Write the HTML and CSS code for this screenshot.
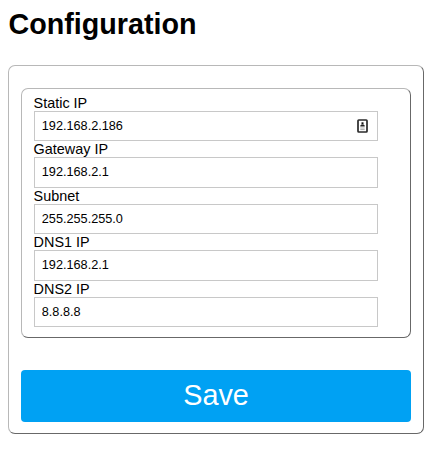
FILE: index.html
```html
<!DOCTYPE html>
<html lang="en">
<head>
<meta charset="utf-8">
<title>Configuration</title>
<link rel="stylesheet" href="styles.css">
</head>
<body>
<h1>Configuration</h1>
<form class="panel">
  <div class="fields">
    <label for="ip">Static IP</label>
    <div class="entry">
      <input id="ip" type="text" value="192.168.2.186">
      <svg class="contact" width="11" height="14" viewBox="0 0 11 14"><rect x="1" y="1" width="9" height="12" rx=".8" fill="#fff" stroke="#2a2a2a" stroke-width="1.7"/><rect x="4.5" y="3.3" width="2" height="2" fill="#111"/><path d="M3.3 7.6V6.5L4.5 5.4H6.5L7.7 6.5V7.6Z" fill="#222"/><path d="M3.3 9H7.7M3.3 10.6H7.7" stroke="#aaa"/></svg>
    </div>
    <label for="gw">Gateway IP</label>
    <input id="gw" type="text" value="192.168.2.1">
    <label for="sn">Subnet</label>
    <input id="sn" type="text" value="255.255.255.0">
    <label for="d1">DNS1 IP</label>
    <input id="d1" type="text" value="192.168.2.1">
    <label for="d2">DNS2 IP</label>
    <input id="d2" type="text" value="8.8.8.8">
  </div>
  <button type="button">Save</button>
</form>
</body>
</html>
```
FILE: styles.css
```css
* { box-sizing: border-box; }
body {
  margin: 0;
  padding: 8px 9px 0 8px;
  font-family: "Liberation Sans", Arial, sans-serif;
  font-size: 14.4px;
  color: #000;
  background: #fff;
}
h1 { margin: 0 0 24px; padding-left: 0.5px; font-size: 28.7px; line-height: 33px; }
.panel {
  height: 369px;
  padding: 22px 12px 11px;
  border: 1px solid;
  border-color: #b8b8b8 #686868 #686868 #b8b8b8;
  border-radius: 7px;
}
.fields {
  height: 250px;
  padding: 5.7px 32.4px 0 11.6px;
  border: 1px solid;
  border-color: #b8b8b8 #686868 #686868 #b8b8b8;
  border-radius: 7px;
}
label { display: block; height: 16.1px; line-height: 16px; }
input {
  display: block;
  width: 100%;
  height: 30.4px;
  padding: 0 7.2px;
  border: 1px solid #c8c8c8;
  border-radius: 0;
  font: 12.7px "Liberation Sans", Arial, sans-serif;
  color: #000;
}
.entry { position: relative; }
.contact { position: absolute; right: 9.6px; top: 8.2px; }
button {
  display: block;
  width: 100%;
  height: 52px;
  margin-top: 32px;
  padding: 0 0 2px;
  border: 0;
  border-radius: 4px;
  background: #00a1f3;
  color: #fff;
  font: 28.8px "Liberation Sans", Arial, sans-serif;
}
```
